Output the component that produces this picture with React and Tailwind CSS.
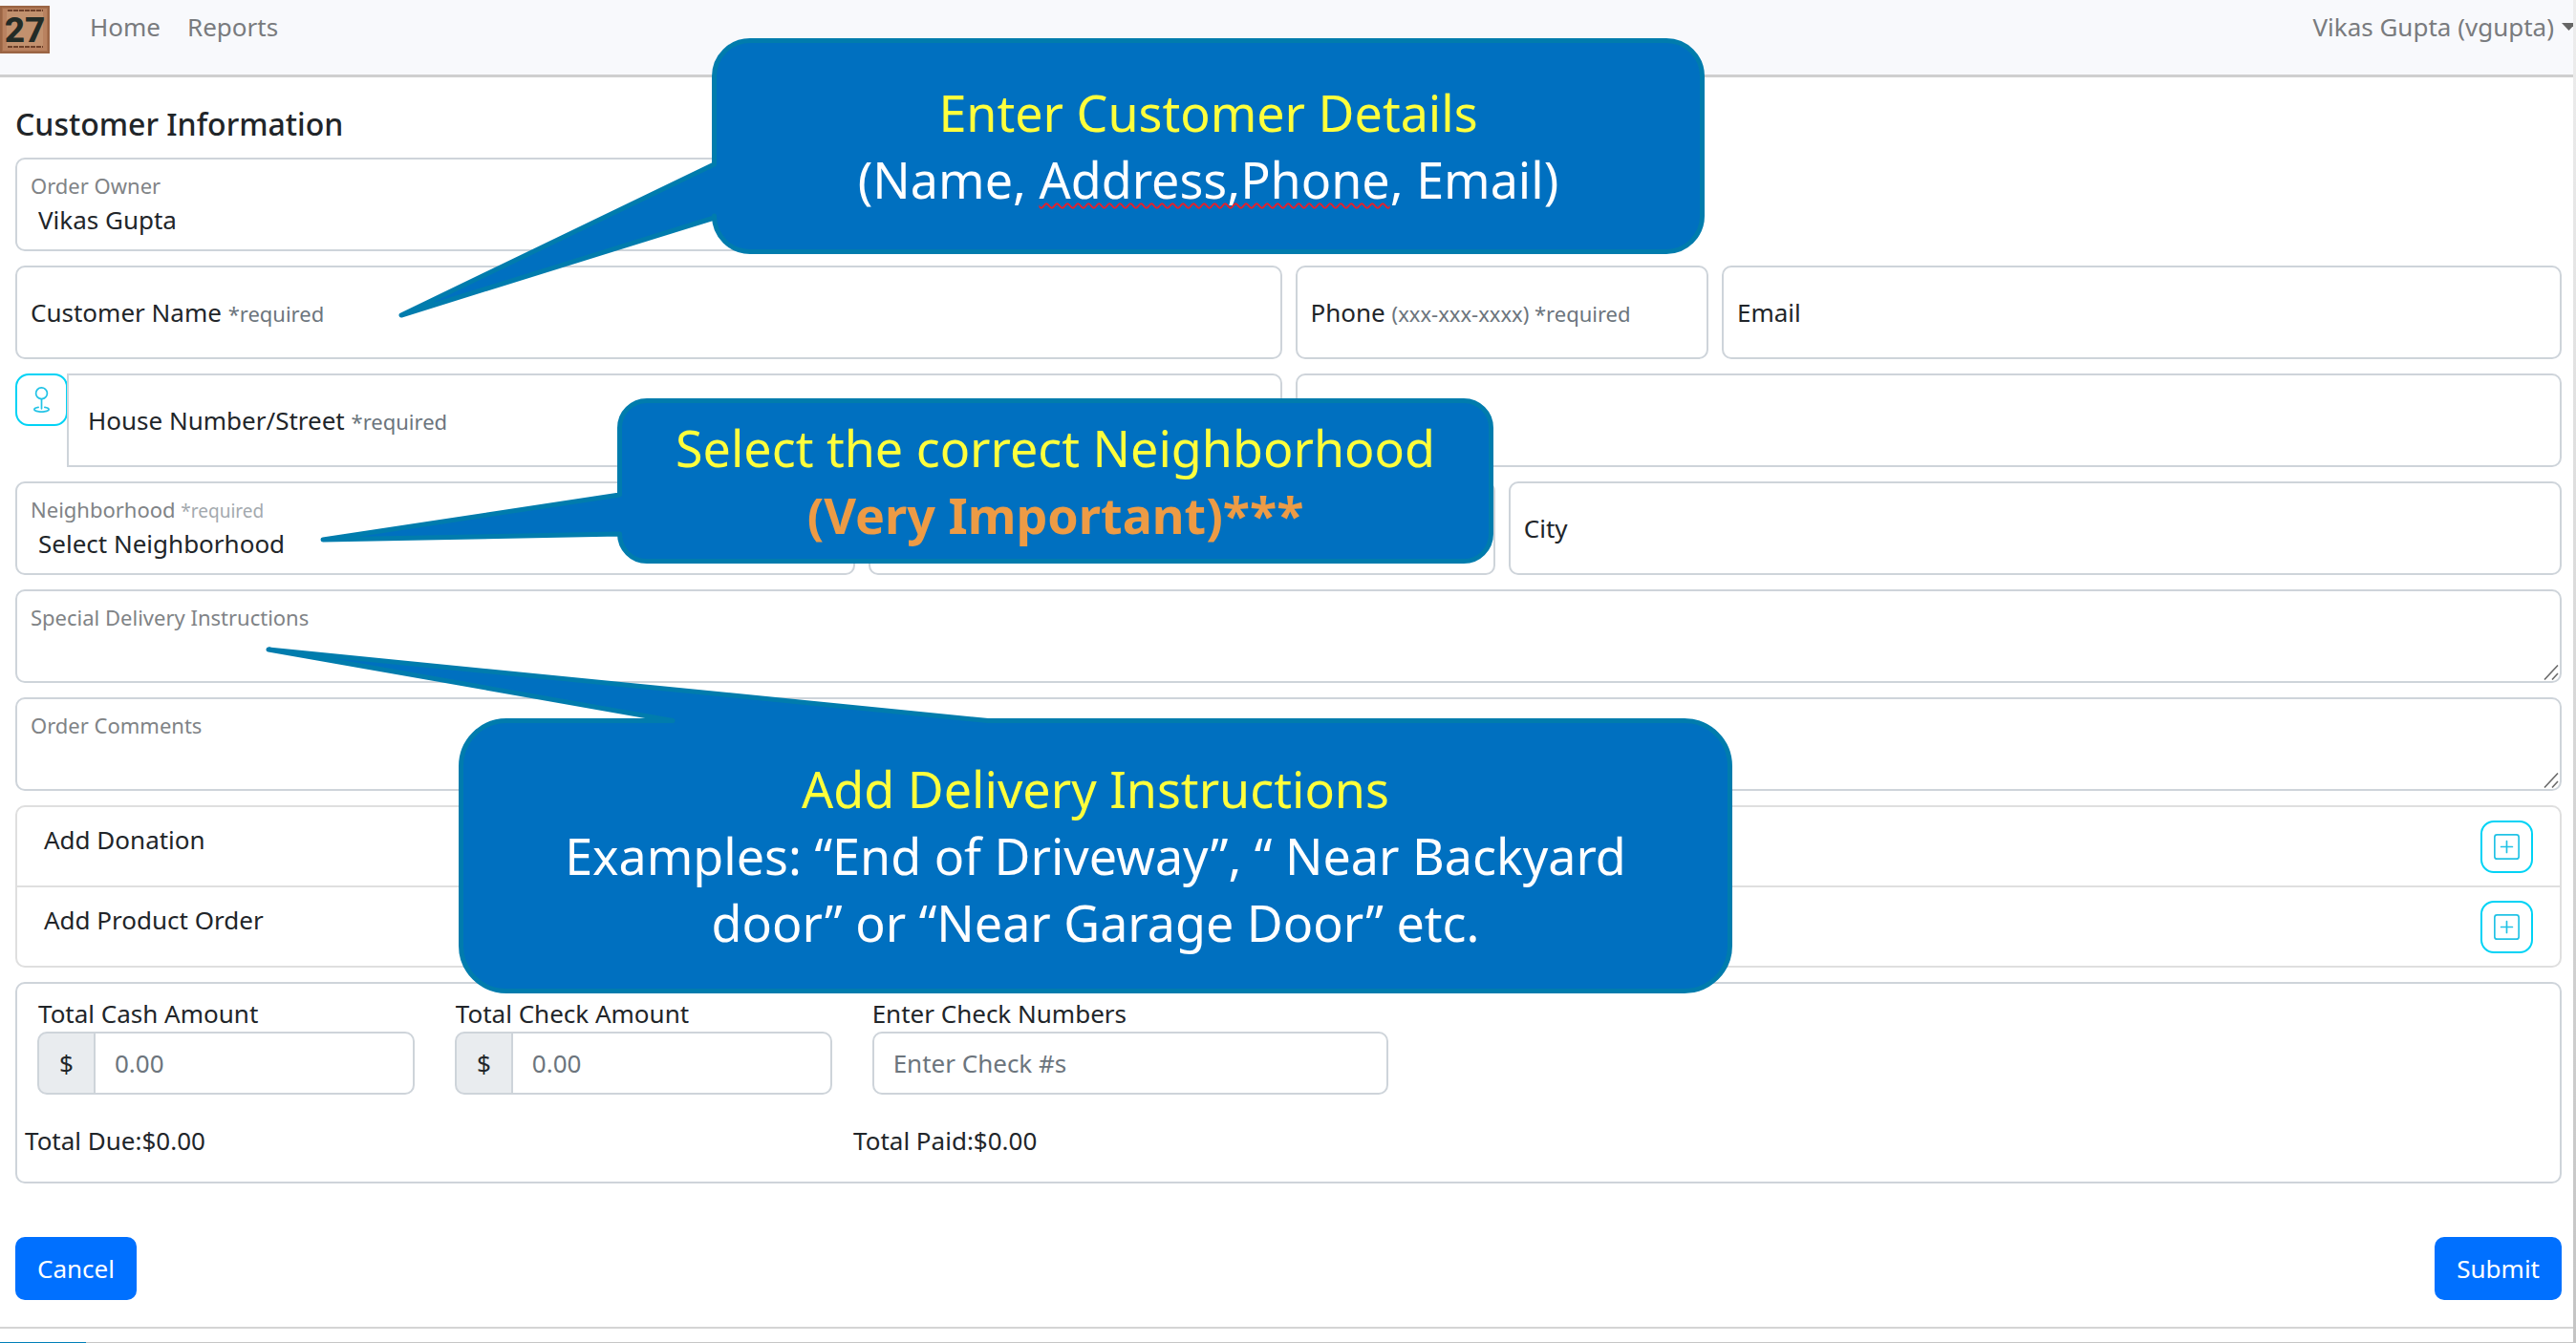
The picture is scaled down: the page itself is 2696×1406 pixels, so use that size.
import React from "react";
import { BsGeo, BsPlusSquare } from "react-icons/bs";

const BOX = "block h-[98px] w-full rounded-[10px] border-2 border-[#ced4da] bg-white text-[26px] leading-9 text-[#212529] outline-none";

function Required({ children = "*required", small = false }) {
  return (
    <span className={small ? "text-[19px] text-[#a3a9ae]" : "text-[22px] text-[#6c757d]"}>{children}</span>
  );
}

function TextField({ id, label, hint, className = "", square = false, name }) {
  return (
    <div className={`relative ${className}`}>
      <input
        id={id}
        type="text"
        aria-label={name}
        className={`${BOX} px-5 ${square ? "rounded-l-none" : ""}`}
      />
      {label && (
        <label
          htmlFor={id}
          className={`pointer-events-none absolute inset-y-0 flex items-center text-[26px] whitespace-pre text-[#212529] ${square ? "left-[22px]" : "left-4"}`}
        >
          <span>
            {label} {hint && <Required>{hint}</Required>}
          </span>
        </label>
      )}
    </div>
  );
}

function FloatingLabel({ id, children }) {
  return (
    <label
      htmlFor={id}
      className="pointer-events-none absolute top-[14px] left-4 text-[22px] leading-[30px] text-[#808386]"
    >
      {children}
    </label>
  );
}

function SelectField({ id, label, value, className = "" }) {
  return (
    <div className={`relative ${className}`}>
      <select id={id} className={`${BOX} appearance-none pt-11 pr-5 pb-[13px] pl-[22px]`}>
        <option>{value}</option>
      </select>
      <FloatingLabel id={id}>{label}</FloatingLabel>
    </div>
  );
}

function AreaField({ id, label }) {
  return (
    <div className="relative col-span-12">
      <textarea id={id} className={`${BOX} resize-none px-5 pt-11`} />
      <FloatingLabel id={id}>{label}</FloatingLabel>
      <svg
        className="pointer-events-none absolute right-[3px] bottom-[3px] h-4 w-4"
        viewBox="0 0 16 16"
        stroke="#6b6b6b"
        strokeWidth="1.6"
        aria-hidden="true"
      >
        <path d="M1 15.5 15 0.5M9 15.5 15 9" />
      </svg>
    </div>
  );
}

const OUTLINE_BUTTON =
  "flex h-[55px] w-[55px] shrink-0 items-center justify-center rounded-[14px] border-2 border-[#00d3f5] bg-white text-[27px] text-[#22c3e6]";

function AddRow({ label, divider }) {
  return (
    <li className={`flex items-start justify-between px-7 pt-[14px] pb-[13px] ${divider ? "border-t-2 border-[#dfdfdf]" : ""}`}>
      <span className="text-[26px] leading-[40px]">{label}</span>
      <button type="button" aria-label={label} className={OUTLINE_BUTTON}>
        <BsPlusSquare />
      </button>
    </li>
  );
}

function MoneyField({ id, label }) {
  return (
    <div className="px-[21px]">
      <label htmlFor={id} className="block pl-px text-[26px] leading-[38px]">
        {label}
      </label>
      <div className="flex h-[66px]">
        <span className="flex w-[61px] shrink-0 items-center justify-center rounded-l-[10px] border-2 border-[#ced4da] bg-[#e9ecef] text-[26px]">
          $
        </span>
        <input
          id={id}
          type="text"
          placeholder="0.00"
          className="-ml-[2px] w-full min-w-0 rounded-r-[10px] border-2 border-[#ced4da] bg-white px-5 text-[26px] outline-none placeholder:text-[#6c757d]"
        />
      </div>
    </div>
  );
}

function Logo() {
  return (
    <svg className="h-[50px] w-[52px]" viewBox="0 0 52 50" role="img" aria-label="27">
      <rect width="52" height="50" fill="#a8704d" />
      <rect x="3" y="3" width="46" height="44" fill="#b98260" />
      <rect x="7" y="6" width="38" height="38" fill="#c2916e" />
      <path d="M8 5H45M8 43H45" stroke="#6e4029" strokeWidth="2" strokeDasharray="5 1" />
      <path d="M1 1H51V49H1Z" fill="none" stroke="#966243" strokeWidth="1.5" />
      <text
        x="26"
        y="38"
        textAnchor="middle"
        fontFamily="Roboto, sans-serif"
        fontWeight="800"
        fontSize="37"
        fill="#232b26"
      >
        27
      </text>
    </svg>
  );
}

/* Speech bubble: the outline is drawn behind centred text. */
function Callout({ className, viewBox, path, children }) {
  return (
    <div className={`absolute flex items-center justify-center text-center text-[52px] leading-[70px] text-white ${className}`}>
      <svg className="absolute inset-0 h-full w-full overflow-visible" viewBox={viewBox} aria-hidden="true">
        <path d={path} fill="#0070c0" stroke="#007cad" strokeWidth="5" strokeLinejoin="round" />
      </svg>
      <div className="relative whitespace-nowrap">{children}</div>
    </div>
  );
}

export default function App() {
  return (
    <div className="flex bg-white font-['Noto_Sans',sans-serif] text-[#212529]">
      <div className="relative min-w-0 flex-1">
        <header className="flex h-[81px] items-start justify-between overflow-hidden border-b-[3px] border-[#cfcfcf] bg-[#f8f9fc]">
          <div className="flex">
            <div className="pt-[6px]">
              <Logo />
            </div>
            <nav className="ml-[42px] flex gap-7 pt-[9px] text-[26px] leading-[38px] text-[#797b7e]">
              <a href="#home">Home</a>
              <a href="#reports">Reports</a>
            </nav>
          </div>
          <button
            type="button"
            className="-mr-[3px] flex items-center gap-2 pt-[9px] text-[26px] leading-[38px] text-[#797b7e]"
          >
            Vikas Gupta (vgupta)
            <svg className="h-2 w-[15px]" viewBox="0 0 15 8" aria-hidden="true">
              <path d="M0 0H15L7.500 8Z" fill="#666" />
            </svg>
          </button>
        </header>

        <main className="pr-3 pl-4">
          <h1 className="pt-[25px] pb-[11px] text-[32px] leading-[48px] font-medium">Customer Information</h1>

          <form>
            <div className="grid grid-cols-12 gap-x-[14px] gap-y-[15px]">
              <SelectField id="owner" label="Order Owner" value="Vikas Gupta" className="col-span-6" />
              <div className="col-span-6" />

              <TextField id="name" label="Customer Name" hint="*required" className="col-span-6" />
              <TextField id="phone" label="Phone" hint="(xxx-xxx-xxxx) *required" className="col-span-2" />
              <TextField id="email" label="Email" className="col-span-4" />

              <div className="col-span-6 flex items-start">
                <button type="button" aria-label="Locate address" className={OUTLINE_BUTTON}>
                  <BsGeo />
                </button>
                <TextField
                  id="street"
                  label="House Number/Street"
                  hint="*required"
                  square
                  className="-ml-px flex-1"
                />
              </div>
              <TextField id="street2" name="Address line 2" className="col-span-6" />

              <SelectField
                id="hood"
                label={
                  <>
                    Neighborhood <Required small />
                  </>
                }
                value="Select Neighborhood"
                className="col-span-4"
              />
              <TextField id="zip" name="Zip" className="col-span-3" />
              <TextField id="city" label="City" className="col-span-5" />

              <AreaField id="instructions" label="Special Delivery Instructions" />
              <AreaField id="comments" label="Order Comments" />

              <ul className="col-span-12 rounded-[10px] border-2 border-[#dfdfdf]">
                <AddRow label="Add Donation" />
                <AddRow label="Add Product Order" divider />
              </ul>

              <section className="col-span-12 rounded-[10px] border-2 border-[#ced4da] pt-3 pb-6">
                <div className="grid grid-cols-[3fr_3fr_4fr_8fr] pr-10">
                  <MoneyField id="cash" label="Total Cash Amount" />
                  <MoneyField id="check" label="Total Check Amount" />
                  <div className="px-[21px]">
                    <label htmlFor="numbers" className="block text-[26px] leading-[38px]">
                      Enter Check Numbers
                    </label>
                    <input
                      id="numbers"
                      type="text"
                      placeholder="Enter Check #s"
                      className="h-[66px] w-full rounded-[10px] border-2 border-[#ced4da] bg-white px-5 text-[26px] outline-none placeholder:text-[#6c757d]"
                    />
                  </div>
                </div>
                <div className="mt-[29px] grid grid-cols-[29fr_60fr] text-[26px] leading-[38px]">
                  <div className="px-2">Total Due:$0.00</div>
                  <div className="px-2">Total Paid:$0.00</div>
                </div>
              </section>
            </div>

            <div className="mt-14 mb-7 flex justify-between">
              <button type="button" className="h-[66px] rounded-[10px] bg-[#0070ff] px-[23px] text-[26px] text-white">
                Cancel
              </button>
              <button type="submit" className="h-[66px] rounded-[10px] bg-[#0070ff] px-[23px] text-[26px] text-white">
                Submit
              </button>
            </div>
          </form>
        </main>

        <footer>
          <div className="h-[16px] border-t-2 border-[#d4d4d4]" />
          <div className="h-px bg-[#c6c6c6]">
            <div className="h-px w-[90px] bg-[#0080b8]" />
          </div>
        </footer>

        <Callout
          className="top-[40px] left-[745px] h-[226px] w-[1039px]"
          viewBox="0 0 1039 226"
          path="M40 2.500H999A37.500 37.500 0 0 1 1036.500 40V186A37.500 37.500 0 0 1 999 223.500H40A37.500 37.500 0 0 1 2.500 186L2.500 188L-325 290L2.500 132V40A37.500 37.500 0 0 1 40 2.500Z"
        >
          <p className="text-[#ffff3c]">Enter Customer Details</p>
          <p>
            (Name,{" "}
            <span className="underline decoration-[#e8202a] decoration-wavy decoration-2 underline-offset-4 [text-decoration-skip-ink:none]">
              Address,Phone
            </span>
            , Email)
          </p>
        </Callout>

        <Callout
          className="top-[417px] left-[646px] h-[173px] w-[917px]"
          viewBox="0 0 917 173"
          path="M31 2.500H886A28.500 28.500 0 0 1 914.500 31V142A28.500 28.500 0 0 1 886 170.500H31A28.500 28.500 0 0 1 2.500 142L-308 148L2.500 101V31A28.500 28.500 0 0 1 31 2.500Z"
        >
          <p className="text-[#ffff3c]">Select the correct Neighborhood</p>
          <p className="font-bold text-[#ed9b45]">(Very Important)***</p>
        </Callout>

        <Callout
          className="top-[752px] left-[480px] h-[288px] w-[1333px]"
          viewBox="0 0 1333 288"
          path="M50 2.500H224L-199 -72L554 2.500H1283A47.500 47.500 0 0 1 1330.500 50V238A47.500 47.500 0 0 1 1283 285.500H50A47.500 47.500 0 0 1 2.500 238V50A47.500 47.500 0 0 1 50 2.500Z"
        >
          <p className="text-[#ffff3c]">Add Delivery Instructions</p>
          <p>Examples: “End of Driveway”, “ Near Backyard</p>
          <p>door” or “Near Garage Door” etc.</p>
        </Callout>
      </div>
      <div className="w-[3px] shrink-0 bg-linear-to-b from-[#ededed] to-[#c4c4c4]" />
    </div>
  );
}
